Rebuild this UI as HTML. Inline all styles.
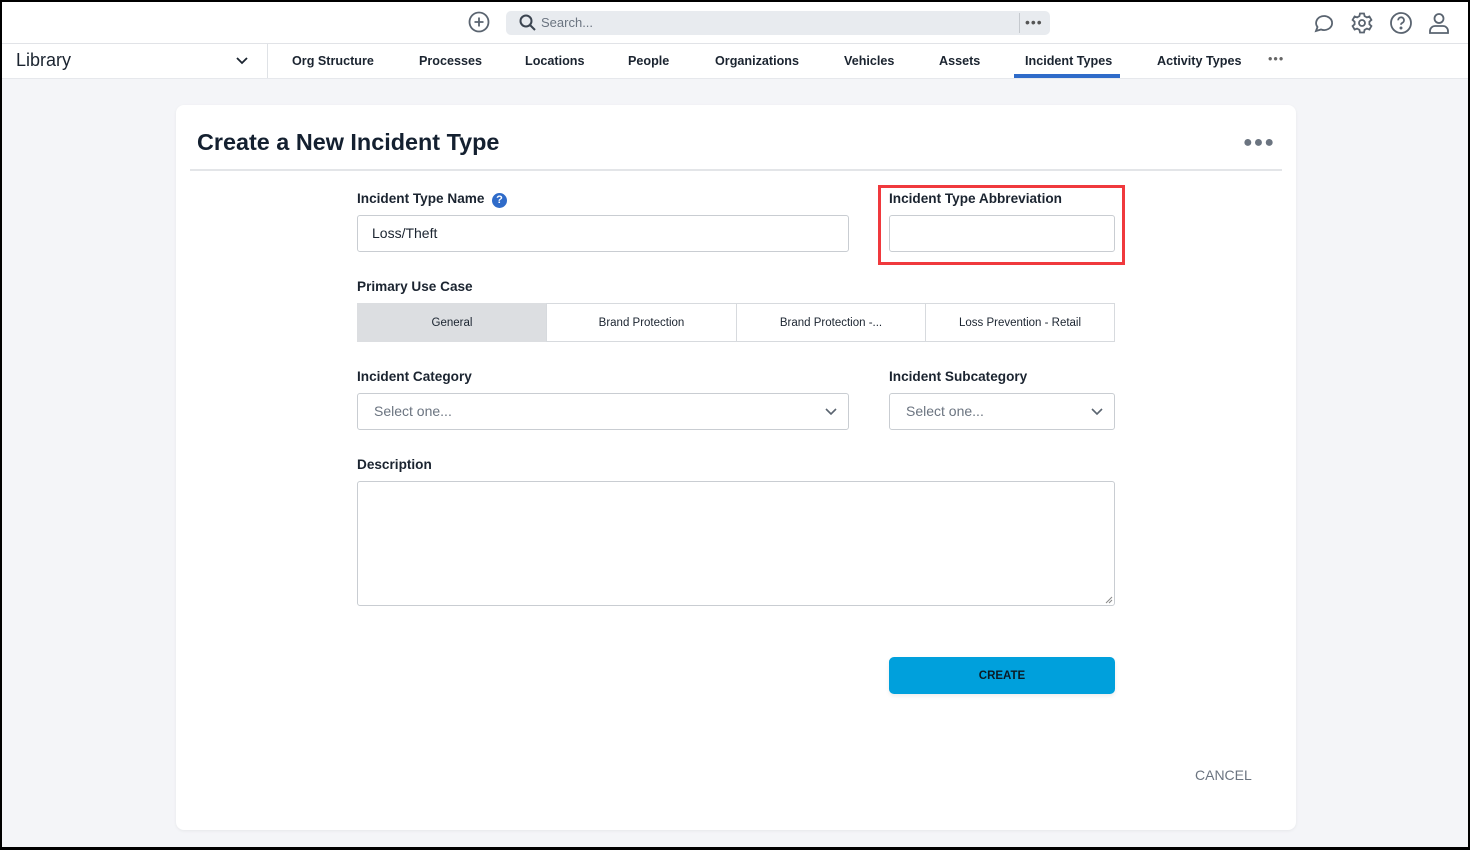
<!DOCTYPE html>
<html><head><meta charset="utf-8"><style>
*{box-sizing:border-box;margin:0;padding:0}
body{width:1470px;height:850px;overflow:hidden;background:#f4f5f8;font-family:"Liberation Sans",sans-serif;color:#1b2430;position:relative}
.a{position:absolute}
.frame{position:absolute;left:0;top:0;width:1470px;height:850px;border:2px solid #000;border-bottom-width:3px;pointer-events:none;z-index:9}
.top{left:0;top:0;width:1470px;height:44px;background:#fff;border-bottom:1px solid #e1e3e7}
.nav{left:0;top:44px;width:1470px;height:35px;background:#fff;border-bottom:1px solid #e6e8ec}
.nav span{position:absolute;top:10px;font-size:12.6px;font-weight:bold;color:#1b2430}
.card{left:176px;top:105px;width:1120px;height:725px;background:#fff;border-radius:8px;box-shadow:0 1px 3px rgba(0,0,0,.06)}
.lbl{font-size:13.6px;font-weight:bold;color:#1b2430}
.inp{background:#fff;border:1px solid #c9cdd2;border-radius:3px}
.seg{top:303px;height:39px;border:1px solid #d7dade;font-size:11.5px;text-align:center;line-height:38px;color:#1b2430;background:#fff}
.ph{font-size:14px;color:#6b7480}
</style></head><body>
<div class="a top"></div>
<svg class="a" style="left:467px;top:10px" width="24" height="24" viewBox="0 0 24 24" fill="none" stroke="#5a6470" stroke-width="1.8"><circle cx="12" cy="12" r="9.5"/><path d="M12 7.5v9M7.5 12h9"/></svg>
<div class="a" style="left:506px;top:11px;width:544px;height:24px;background:#e8ebef;border-radius:5px"></div>
<svg class="a" style="left:518px;top:13px" width="20" height="20" viewBox="0 0 20 20" fill="none" stroke="#3b4450" stroke-width="2"><circle cx="8" cy="8" r="5.5"/><path d="M12 12l5 5"/></svg>
<div class="a" style="left:541px;top:15px;font-size:13px;color:#6b7480">Search...</div>
<div class="a" style="left:1019px;top:13px;width:1px;height:20px;background:#c5c9ce"></div>
<div class="a" style="left:1025px;top:14px;font-size:14px;color:#555;letter-spacing:1px">•••</div>
<svg class="a" style="left:1312px;top:12px" width="24" height="22" viewBox="0 0 24 22" fill="none" stroke="#5a6470" stroke-width="1.8"><path d="M4 19l1.5-4A8 7 0 1 1 9 17.5z"/></svg>
<svg class="a" style="left:1350px;top:11px" width="24" height="24" viewBox="0 0 24 24" fill="none" stroke="#5a6470" stroke-width="1.8"><circle cx="12" cy="12" r="3"/><path d="M10 2.5h4l.6 2.6 2.3 1.3 2.5-.9 2 3.4-2 1.8v2.6l2 1.8-2 3.4-2.5-.9-2.3 1.3-.6 2.6h-4l-.6-2.6-2.3-1.3-2.5.9-2-3.4 2-1.8v-2.6l-2-1.8 2-3.4 2.5.9 2.3-1.3z"/></svg>
<svg class="a" style="left:1389px;top:11px" width="24" height="24" viewBox="0 0 24 24" fill="none" stroke="#5a6470" stroke-width="1.8"><circle cx="12" cy="12" r="10"/><path d="M9.2 9.3a2.9 2.9 0 1 1 4 2.6c-.8.4-1.2 1-1.2 1.9"/><circle cx="12" cy="17" r=".6" fill="#5a6470"/></svg>
<svg class="a" style="left:1427px;top:11px" width="24" height="24" viewBox="0 0 24 24" fill="none" stroke="#5a6470" stroke-width="1.8"><circle cx="12" cy="7.5" r="4.5"/><path d="M3 22v-2.5A5 5 0 0 1 8 15h8a5 5 0 0 1 5 5V22z"/></svg>

<div class="a nav">
<div class="a" style="left:16px;top:6px;font-size:18px;color:#1b2430">Library</div>
<svg class="a" style="left:235px;top:11px" width="14" height="12" viewBox="0 0 14 12" fill="none" stroke="#1b2430" stroke-width="1.8"><path d="M2 3l5 5 5-5"/></svg>
<div class="a" style="left:267px;top:0;width:1px;height:34px;background:#dfe2e6"></div>
<span style="left:292px">Org Structure</span>
<span style="left:419px">Processes</span>
<span style="left:525px">Locations</span>
<span style="left:628px">People</span>
<span style="left:715px">Organizations</span>
<span style="left:844px">Vehicles</span>
<span style="left:939px">Assets</span>
<span style="left:1025px">Incident Types</span>
<div class="a" style="left:1014px;top:30px;width:106px;height:4px;background:#2f6bc9"></div>
<span style="left:1157px">Activity Types</span>
<span style="left:1268px;top:8px;color:#666;font-weight:normal;letter-spacing:1px">•••</span>
</div>

<div class="a card"></div>
<div class="a" style="left:197px;top:129px;font-size:23.4px;font-weight:bold;color:#142030">Create a New Incident Type</div>
<div class="a" style="left:1243px;top:134px;font-size:16px;color:#6b7480;letter-spacing:1px">●●●</div>
<div class="a" style="left:190px;top:169px;width:1092px;height:2px;background:#e3e5e8"></div>

<div class="a lbl" style="left:357px;top:191px">Incident Type Name</div>
<div class="a" style="left:492px;top:193px;width:15px;height:15px;border-radius:50%;background:#2f6bc9;color:#fff;font-size:11px;font-weight:bold;text-align:center;line-height:15px">?</div>
<div class="a inp" style="left:357px;top:215px;width:492px;height:37px"></div>
<div class="a" style="left:372px;top:225px;font-size:14px;color:#1b2430">Loss/Theft</div>

<div class="a" style="left:878px;top:185px;width:247px;height:80px;border:3px solid #f0393d"></div>
<div class="a lbl" style="left:889px;top:191px">Incident Type Abbreviation</div>
<div class="a inp" style="left:889px;top:215px;width:226px;height:37px"></div>

<div class="a lbl" style="left:357px;top:279px">Primary Use Case</div>
<div class="a seg" style="left:357px;width:190px;background:#dcdee1;border-color:#dcdee1">General</div>
<div class="a seg" style="left:546px;width:191px">Brand Protection</div>
<div class="a seg" style="left:736px;width:190px">Brand Protection -...</div>
<div class="a seg" style="left:925px;width:190px">Loss Prevention - Retail</div>

<div class="a lbl" style="left:357px;top:369px">Incident Category</div>
<div class="a inp" style="left:357px;top:393px;width:492px;height:37px"></div>
<div class="a ph" style="left:374px;top:403px">Select one...</div>
<svg class="a" style="left:824px;top:406px" width="14" height="12" viewBox="0 0 14 12" fill="none" stroke="#5a6470" stroke-width="1.6"><path d="M2 3l5 5 5-5"/></svg>
<div class="a lbl" style="left:889px;top:369px">Incident Subcategory</div>
<div class="a inp" style="left:889px;top:393px;width:226px;height:37px"></div>
<div class="a ph" style="left:906px;top:403px">Select one...</div>
<svg class="a" style="left:1090px;top:406px" width="14" height="12" viewBox="0 0 14 12" fill="none" stroke="#5a6470" stroke-width="1.6"><path d="M2 3l5 5 5-5"/></svg>

<div class="a lbl" style="left:357px;top:457px">Description</div>
<div class="a inp" style="left:357px;top:481px;width:758px;height:125px"></div>
<svg class="a" style="left:1105px;top:596px" width="8" height="8" viewBox="0 0 8 8" stroke="#888"><path d="M1 7l6-6M4 7l3-3"/></svg>

<div class="a" style="left:889px;top:657px;width:226px;height:37px;background:#00a0dc;border-radius:5px;box-shadow:0 2px 4px rgba(0,0,0,.08);text-align:center;line-height:38px;font-size:11.5px;font-weight:bold;color:#0b1a24">CREATE</div>
<div class="a" style="left:1195px;top:767px;font-size:14px;color:#6b7480">CANCEL</div>
<div class="frame"></div>
</body></html>
